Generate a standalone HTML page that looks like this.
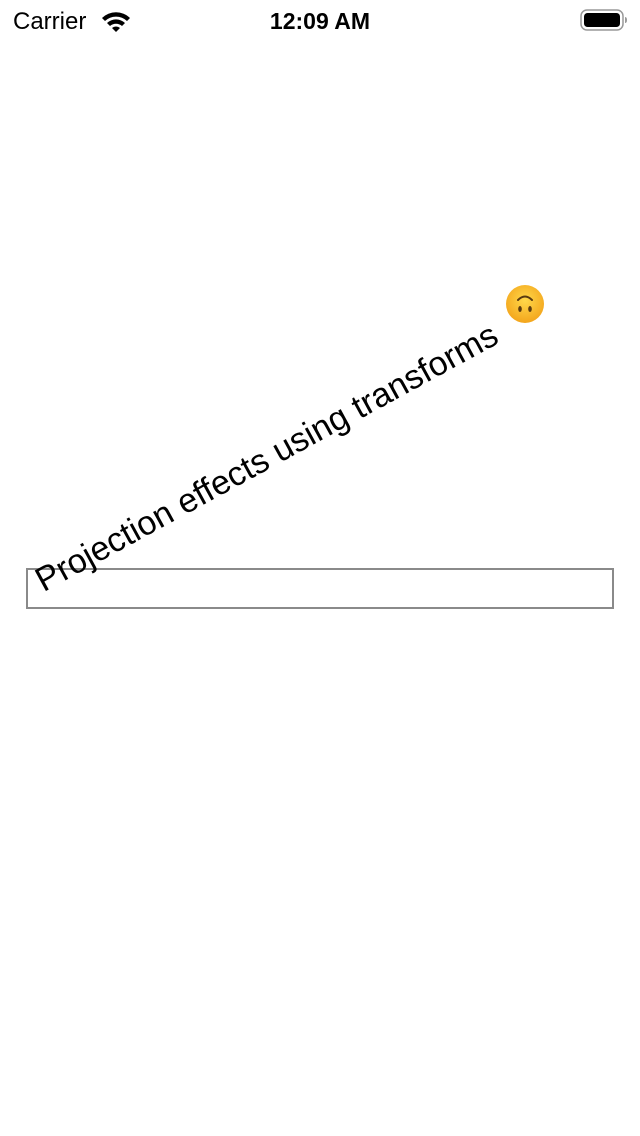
<!DOCTYPE html>
<html><head><meta charset="utf-8"><style>
body{margin:0;width:640px;height:1136px;background:#fff;position:relative;overflow:hidden;font-family:"Liberation Sans",sans-serif;}
.sb{position:absolute;top:0;left:0;width:640px;height:40px;}
.carrier{position:absolute;left:13px;top:8px;font-size:24px;color:#000;}
.time{position:absolute;left:0;width:640px;text-align:center;top:8px;font-size:23px;font-weight:bold;}
.txt{position:absolute;left:45px;top:564px;font-size:34px;line-height:34px;white-space:nowrap;transform-origin:0 31px;transform:rotate(-28.7deg);color:#000;}
.box{position:absolute;left:26px;top:568px;width:584px;height:37px;border:2px solid #8a8a8a;}
</style></head><body>
<div class="sb">
<div class="carrier">Carrier</div>
<svg style="position:absolute;left:100px;top:10px" width="32" height="22" viewBox="0 0 32 22">
<path d="M2 8 A20 20 0 0 1 30 8 L27 11 A16 16 0 0 0 5 11Z" fill="#000"/>
<path d="M7 13 A13 13 0 0 1 25 13 L22 16 A9 9 0 0 0 10 16Z" fill="#000"/>
<path d="M12 18 A6 6 0 0 1 20 18 L16 22Z" fill="#000"/>
</svg>
<div class="time">12:09 AM</div>
<svg style="position:absolute;left:580px;top:9px" width="48" height="23" viewBox="0 0 48 23">
<rect x="1" y="1" width="42" height="20" rx="6" fill="none" stroke="#999" stroke-width="1.5"/>
<rect x="4" y="4" width="36" height="14" rx="3.5" fill="#000"/>
<path d="M45 8 Q47 8 47 11 Q47 14 45 14Z" fill="#999"/>
</svg>
</div>
<div class="box"></div>
<div class="txt">Projection effects using transforms</div>
<svg style="position:absolute;left:505px;top:284px" width="40" height="40" viewBox="0 0 40 40">
<defs><radialGradient id="g" cx="50%" cy="40%" r="60%"><stop offset="0" stop-color="#ffd84a"/><stop offset="1" stop-color="#f3a51c"/></radialGradient></defs>
<circle cx="20" cy="20" r="19" fill="url(#g)"/>
<path d="M13 16 Q20 9 27 16" fill="none" stroke="#5a3a10" stroke-width="2" stroke-linecap="round"/>
<ellipse cx="15" cy="25" rx="1.8" ry="3" fill="#5a3a10"/>
<ellipse cx="25" cy="25" rx="1.8" ry="3" fill="#5a3a10"/>
</svg>
</body></html>
